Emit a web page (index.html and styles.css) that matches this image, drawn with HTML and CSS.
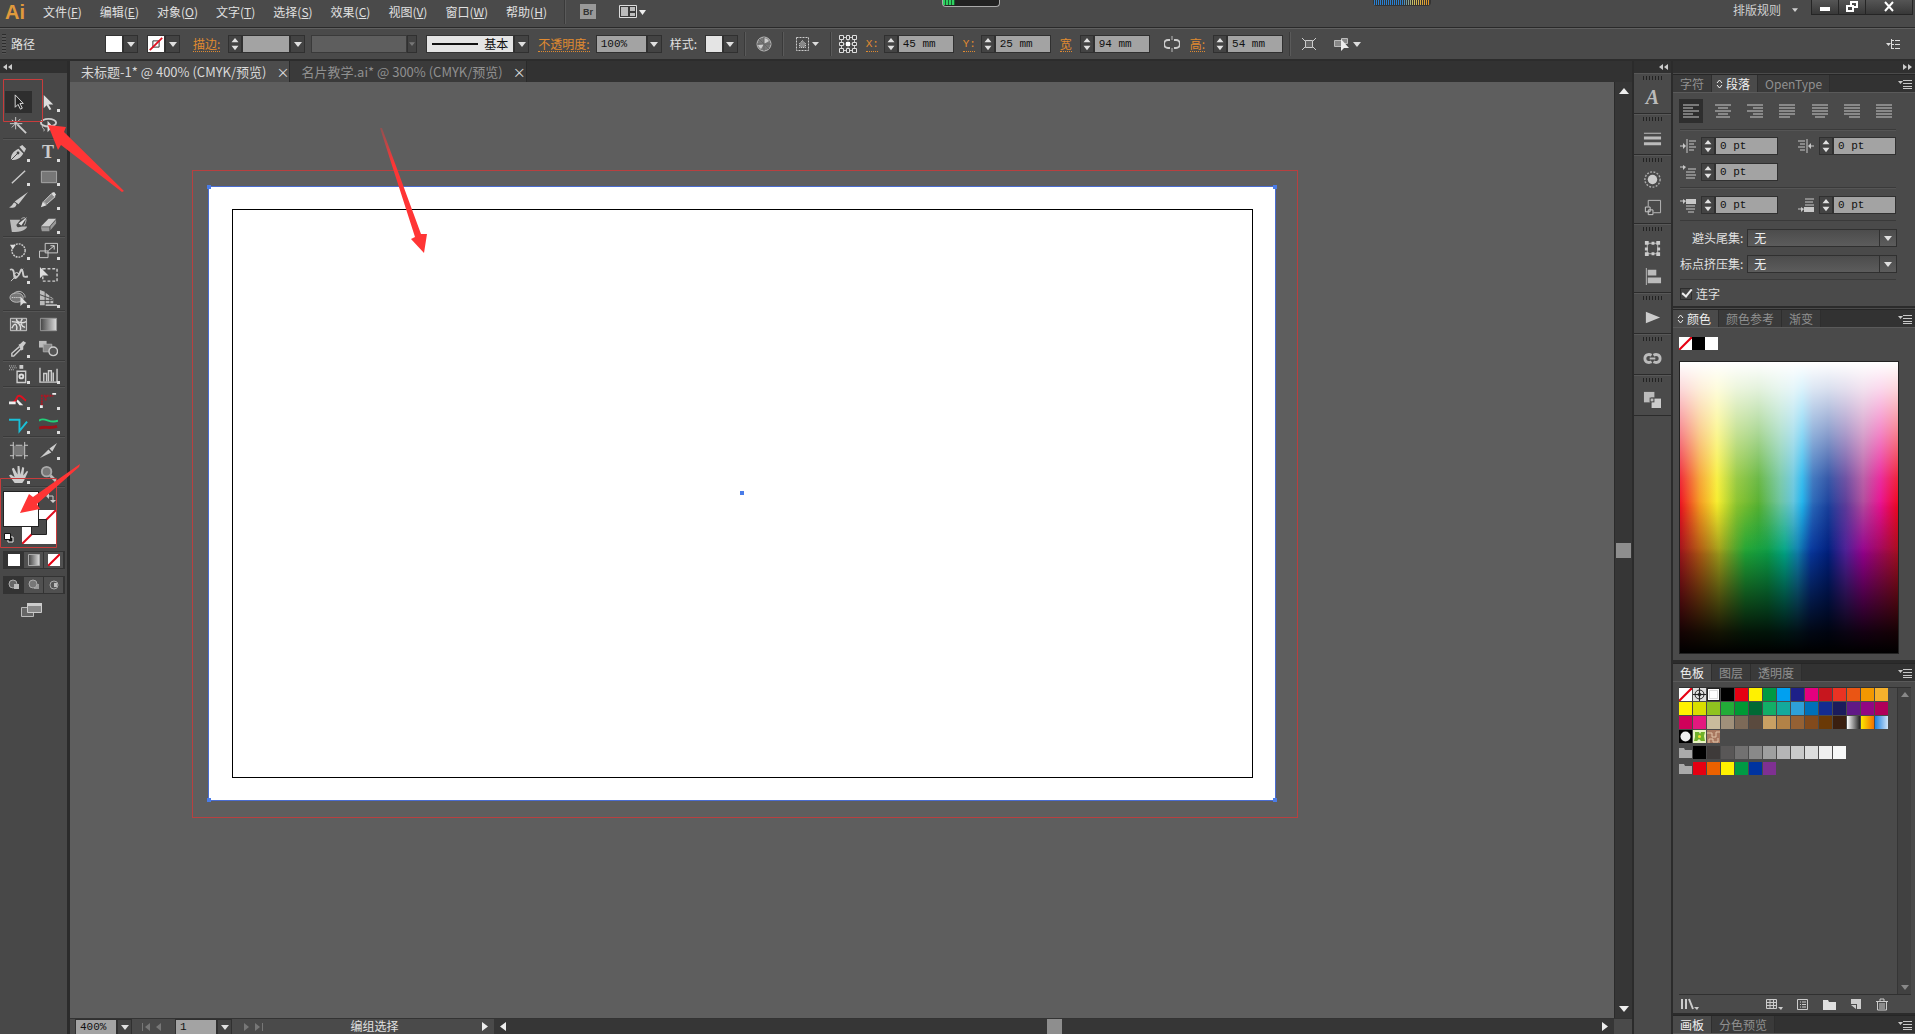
FILE: index.html
```html
<!DOCTYPE html>
<html lang="zh-CN">
<head>
<meta charset="utf-8">
<title>未标题-1 - Ai</title>
<link rel="stylesheet" href="styles.css">
</head>
<body>
<svg class="sprite" aria-hidden="true">
  <symbol id="down" viewBox="0 0 8 5"><path fill="currentColor" d="M0 0h8L4 5z"/></symbol>
  <symbol id="updown" viewBox="0 0 8 16"><path fill="currentColor" d="M0 6h8L4 1zM0 10h8l-4 5z"/></symbol>
  <symbol id="cycle" viewBox="0 0 7 10"><path fill="none" stroke="currentColor" d="M1 4l2.500-3L6 4M1 6l2.500 3L6 6"/></symbol>
  <symbol id="panelmenu" viewBox="0 0 14 10"><path fill="currentColor" d="M0 2h5L2.500 5zM5 1h9v1H5zM5 4h9v1H5zM5 7h9v1H5zM5 9h9v1H5z"/></symbol>
  <symbol id="folder" viewBox="0 0 13 11"><path fill="currentColor" d="M0 1h5l1 2h7v8H0z"/></symbol>
  <symbol id="none" viewBox="0 0 12 12"><path fill="#fff" d="M0 0h12v12H0z"/><path stroke="#e60012" stroke-width="2" d="M0 12L12 0"/></symbol>
  <linearGradient id="g1"><stop stop-color="#444"/><stop offset="1" stop-color="#ddd"/></linearGradient>
</svg>

<header class="menubar">
  <strong class="logo">Ai</strong>
  <nav class="menus">
    <button>文件(<u>F</u>)</button><button>编辑(<u>E</u>)</button><button>对象(<u>O</u>)</button><button>文字(<u>T</u>)</button><button>选择(<u>S</u>)</button><button>效果(<u>C</u>)</button><button>视图(<u>V</u>)</button><button>窗口(<u>W</u>)</button><button>帮助(<u>H</u>)</button>
  </nav>
  <i class="vsep"></i>
  <button class="bridge">Br</button>
  <button class="arrange" aria-label="排列文档"><svg width="28" height="14" viewBox="0 0 28 14"><path fill="#3a3a3a" stroke="#ddd" d="M.5.500h17v12H.5z"/><path fill="#bbb" d="M2 2h7v9H2zM11 2h5v4h-5zM11 8h5v3h-5z"/><path fill="#eee" d="M20 5h7l-3.500 5z"/></svg></button>
  <span class="meter green"></span>
  <span class="meter blue"></span>
  <button class="workspace">排版规则 <svg width="6" height="4"><use href="#down"/></svg></button>
  <div class="winbtns">
    <button aria-label="最小化"><svg width="12" height="12"><path fill="#fff" d="M1 6h10v4H1z"/></svg></button>
    <button aria-label="还原"><svg width="14" height="12"><path fill="none" stroke="#fff" stroke-width="2" d="M6 4V1h6v5H9M2 5h6v5H2z"/></svg></button>
    <button class="close" aria-label="关闭"><svg width="12" height="12"><path fill="none" stroke="#fff" stroke-width="2" d="M2 1l8 9M10 1L2 10"/></svg></button>
  </div>
</header>

<div class="control">
  <i class="grip"></i>
  <span class="kind">路径</span>
  <div class="combo"><span class="chip white"></span><button class="dd" aria-label="填色"><svg><use href="#down"/></svg></button></div>
  <div class="combo"><svg class="chip" viewBox="0 0 18 18"><path fill="#fff" d="M0 0h18v18H0z"/><path fill="none" stroke="#222" d="M5.500 5.500h7v7h-7z"/><path stroke="#e01020" stroke-width="2" d="M2 16L16 2"/></svg><button class="dd" aria-label="描边颜色"><svg><use href="#down"/></svg></button></div>
  <div class="field stroke"><label class="hot" for="sw">描边:</label><button class="spin" aria-label="微调"><svg><use href="#updown"/></svg></button><input id="sw" class="w48"><button class="dd" aria-label="粗细"><svg><use href="#down"/></svg></button></div>
  <div class="combo off"><span class="profile"></span><button class="dd" aria-label="变量宽度"><svg><use href="#down"/></svg></button></div>
  <div class="combo"><span class="brush"><i></i>基本</span><button class="dd" aria-label="画笔"><svg><use href="#down"/></svg></button></div>
  <div class="field"><label class="hot" for="op">不透明度:</label><input id="op" class="w51" value="100%"><button class="dd" aria-label="不透明度"><svg><use href="#down"/></svg></button></div>
  <div class="field style"><span class="lab">样式:</span><span class="chip pale"></span><button class="dd" aria-label="样式"><svg><use href="#down"/></svg></button></div>
  <i class="vsep"></i>
  <button class="ic" aria-label="重新着色"><svg width="16" height="16"><circle cx="8" cy="8" r="7" fill="#777" stroke="#bbb"/><path fill="#ccc" d="M8 8V2a6 6 0 015 3zM8 8l-6 1a6 6 0 003 4z"/><path stroke="#666" d="M8 1v14M1 8h14M3 3l10 10"/></svg></button>
  <i class="vsep"></i>
  <button class="ic" aria-label="对齐"><svg width="26" height="16"><path fill="none" stroke="#ccc" stroke-dasharray="2 1" d="M2.500 1.500h12v13h-12z"/><path fill="#888" stroke="#ccc" stroke-dasharray="1 1" d="M5.500 7.500l3-3 3 3v4h-6z"/><path fill="#ddd" d="M18 6h7l-3.500 4z"/></svg></button>
  <i class="vsep"></i>
  <button class="ic ref" aria-label="参考点"><svg width="20" height="20"><path fill="none" stroke="#ccc" d="M3.500 3.500h13v13h-13z"/><path fill="none" stroke="#999" d="M3 10h14M10 3v14"/><path fill="#444" stroke="#ddd" d="M1.500 1.500h4v4h-4zM8.500 1.500h3v4h-3zM14.500 1.500h4v4h-4zM1.500 8.500h4v3h-4zM14.500 8.500h4v3h-4zM1.500 14.500h4v4h-4zM8.500 14.500h3v4h-3zM14.500 14.500h4v4h-4z"/><path fill="#fff" d="M8 8h4v4H8z"/></svg></button>
  <div class="field xy"><label class="hot" for="fx">X:</label><button class="spin" aria-label="微调"><svg><use href="#updown"/></svg></button><input id="fx" value="45 mm"></div>
  <div class="field xy"><label class="hot" for="fy">Y:</label><button class="spin" aria-label="微调"><svg><use href="#updown"/></svg></button><input id="fy" value="25 mm"></div>
  <div class="field wh"><label class="hot" for="fw">宽</label><button class="spin" aria-label="微调"><svg><use href="#updown"/></svg></button><input id="fw" value="94 mm"></div>
  <button class="ic" aria-label="约束比例"><svg width="16" height="16"><path fill="none" stroke="#ccc" stroke-width="2" d="M6 4H4a3 3 0 000 8h2M10 4h2a3 3 0 010 8h-2"/><path stroke="#bbb" d="M8 0v4M8 12v4"/></svg></button>
  <div class="field gao"><label class="hot" for="fh">高:</label><button class="spin" aria-label="微调"><svg><use href="#updown"/></svg></button><input id="fh" value="54 mm"></div>
  <i class="vsep"></i>
  <button class="ic" aria-label="隔离"><svg width="16" height="16"><path fill="#666" stroke="#ccc" d="M4.500 4.500h7v7h-7z"/><path stroke="#ccc" d="M1 2l3 3M15 2l-3 3M1 14l3-3M15 14l-3-3"/></svg></button>
  <button class="ic similar" aria-label="选择类似对象"><svg width="28" height="16"><path fill="#888" stroke="#bbb" d="M1.500 4.500h7v6h-7zM8.500 2.500h6v5h-6z"/><path fill="#eee" d="M8 3v12l3-3h5z"/><path fill="#ddd" d="M20 6h8l-4 5z"/></svg></button>
  <button class="ic last" aria-label="控制面板菜单"><svg width="14" height="10"><path fill="#ddd" d="M0 4h5L2.500 7zM6 1h2v1H6zM9 1h5v1H9zM6 5h2v1H6zM9 5h5v1H9zM6 9h2v1H6zM9 9h5v1H9zM5 0h1v10H5z"/></svg></button>
</div>

<main class="main">
  <aside class="tools">
    <div class="cap left"><svg width="9" height="6"><path fill="#ccc" d="M4 0v6L0 3zM9 0v6L5 3z"/></svg></div>
    <div class="toolset">
      <div class="tg">
        <button class="t on" aria-label="选择"><svg viewBox="0 0 20 20"><path fill="#222" stroke="#ddd" d="M6.500 2v13l3-3 2.500 5 2-1-2.500-5H15z"/></svg></button>
        <button class="t m" aria-label="直接选择"><svg viewBox="0 0 20 20"><path fill="#ddd" d="M5 2v14l3-3 3 5 2-1-3-5h5z"/></svg></button>
        <button class="t" aria-label="魔棒"><svg viewBox="0 0 20 20"><path stroke="#ccc" stroke-width="2" d="M9 8l9 9"/><path stroke="#ccc" d="M7 0v13M1 7h13M3 3l9 8M12 2L3 11"/></svg></button>
        <button class="t" aria-label="套索"><svg viewBox="0 0 20 20"><ellipse cx="10" cy="6" rx="8" ry="4" fill="none" stroke="#ccc" stroke-width="2"/><path fill="none" stroke="#ccc" d="M4 9c-2 3 3 3 1 6"/><path fill="#ddd" d="M9 4v12l3-3h5z"/></svg></button>
      </div>
      <div class="tg">
        <button class="t m" aria-label="钢笔"><svg viewBox="0 0 20 20"><path fill="#ccc" d="M2 18c0-6 2-9 8-12l5 5c-3 5-6 7-13 7zM11 4l3-2 4 4-2 4z"/><path stroke="#444" d="M2 18l7-7"/><circle cx="9.500" cy="10.500" r="1.500" fill="#444"/></svg></button>
        <button class="t m tt" aria-label="文字">T</button>
        <button class="t m" aria-label="直线"><svg viewBox="0 0 20 20"><path stroke="#ccc" stroke-width="1.500" d="M3 17L17 4"/></svg></button>
        <button class="t m" aria-label="矩形"><svg viewBox="0 0 20 20"><path fill="#777" stroke="#aaa" d="M2.500 4.500h16v12h-16z"/></svg></button>
        <button class="t" aria-label="画笔"><svg viewBox="0 0 20 20"><path fill="#ccc" d="M20 1L10 14l-4-3zM8 14c-1 4-4 4-8 3 4-1 4-5 6-5z"/></svg></button>
        <button class="t m" aria-label="铅笔"><svg viewBox="0 0 20 20"><path fill="#888" stroke="#ccc" d="M5 11l8-8 4 3-9 8z"/><path fill="#ddd" d="M2 17l2-6 4 4zM13 2l3-1 2 3-2 2z"/></svg></button>
        <button class="t" aria-label="斑点画笔"><svg viewBox="0 0 20 20"><path fill="#bbb" d="M1 5h11l-3 4c-2 1-1 4 1 4l4-1h5c0 3-6 6-16 6z"/><path fill="#ddd" d="M19 2l-6 9-3-2z"/><path fill="none" stroke="#bbb" d="M13 4c4-3 7 0 3 7"/></svg></button>
        <button class="t m" aria-label="橡皮擦"><svg viewBox="0 0 20 20"><path fill="#ccc" d="M2 12l8-8h8l-7 8z"/><path fill="#999" d="M2 13h9v4H3zM12 12l6-7v4l-6 7z"/></svg></button>
      </div>
      <div class="tg">
        <button class="t m" aria-label="旋转"><svg viewBox="0 0 20 20"><circle cx="10" cy="10" r="7" fill="none" stroke="#ccc" stroke-width="1.500" stroke-dasharray="2 1"/><path fill="#ddd" d="M1 4l6 0-3 5z"/></svg></button>
        <button class="t m" aria-label="比例缩放"><svg viewBox="0 0 20 20"><path fill="none" stroke="#ccc" d="M.5 10.500h9v7h-9zM6.500 2.500h13v10h-13z"/><path fill="none" stroke="#ddd" d="M10 10l6-5M12 5h4v4"/></svg></button>
        <button class="t m" aria-label="宽度"><svg viewBox="0 0 20 20"><path fill="none" stroke="#ccc" stroke-width="2" d="M1 5c7-3 2 12 7 8s4-11 6-7-1 8 6 6"/><path fill="none" stroke="#ccc" d="M2 17L15 4"/><circle cx="8" cy="10" r="2" fill="#444" stroke="#ddd"/></svg></button>
        <button class="t" aria-label="自由变换"><svg viewBox="0 0 20 20"><path fill="none" stroke="#ccc" stroke-width="1.500" stroke-dasharray="3 2" d="M4 4h15v13H4z"/><path fill="#ddd" d="M1 2v12l3-3h6z"/></svg></button>
        <button class="t m" aria-label="形状生成器"><svg viewBox="0 0 20 20"><ellipse cx="8" cy="9" rx="7" ry="5" fill="#777" stroke="#bbb"/><path fill="none" stroke="#bbb" d="M5 5c4-5 12-2 12 4"/><path stroke="#eee" stroke-dasharray="1 1" d="M3 9h10"/><path fill="#ddd" d="M12 8v10l3-3h4z"/></svg></button>
        <button class="t m" aria-label="透视网格"><svg viewBox="0 0 20 20"><path fill="#bbb" d="M1 1l5 2v14H1zM7 4l4 3v8H7zM12 8l3 2v5h-3zM7 16h12v2H7z"/><path stroke="#444" d="M1 6l14 5M1 12h14"/></svg></button>
      </div>
      <div class="tg">
        <button class="t" aria-label="网格"><svg viewBox="0 0 20 20"><path fill="#666" stroke="#ccc" d="M1.500 3.500h17v13h-17z"/><path fill="none" stroke="#ddd" stroke-width="1.500" d="M3 14c4-9 6-2 5 2M3 7c7 0 10 3 9 9M8 4c-1 4 7 5 10 3M14 4c-3 4-1 8 3 9"/></svg></button>
        <button class="t" aria-label="渐变"><svg viewBox="0 0 20 20"><path fill="url(#g1)" stroke="#999" d="M1.500 3.500h17v13h-17z"/></svg></button>
        <button class="t m" aria-label="吸管"><svg viewBox="0 0 20 20"><path fill="#ccc" d="M10 6l2-1 3-3 3 2-3 4v3l-2 1z"/><path fill="none" stroke="#ccc" stroke-width="1.500" d="M11 8l-8 7v3h2l8-8"/></svg></button>
        <button class="t" aria-label="混合"><svg viewBox="0 0 20 20"><path fill="#bbb" d="M0 2h8v7H0z"/><path fill="#888" stroke="#aaa" d="M4.500 5.500h9v8h-9z"/><circle cx="15" cy="13" r="4.500" fill="#555" stroke="#ccc" stroke-width="1.500"/></svg></button>
      </div>
      <div class="tg">
        <button class="t m" aria-label="符号喷枪"><svg viewBox="0 0 20 20"><path stroke="#ccc" stroke-dasharray="1 1" d="M0 1h8M1 3h7M0 5h6"/><path fill="#ccc" d="M11 0h4v4h-4z"/><path fill="none" stroke="#ccc" stroke-width="1.500" d="M8.500 6.500h9v12h-9z"/><circle cx="13" cy="12" r="2" fill="none" stroke="#ddd" stroke-width="2"/></svg></button>
        <button class="t m" aria-label="柱形图"><svg viewBox="0 0 20 20"><path fill="none" stroke="#ccc" stroke-width="1.500" d="M1 3v15h18V4M5 17V9h3v8M10 17V6h3v11M15 17V8"/></svg></button>
      </div>
      <div class="tg">
        <button class="t m" aria-label="锚点移除"><svg viewBox="0 0 20 20"><path fill="none" stroke="#e01020" stroke-width="2" d="M3 12c6 0 4-8 8-7s4 4 7 5"/><path fill="#eee" d="M0 11h7v3H0zM9 9l6 6h-4l-3-4z"/></svg></button>
        <button class="t m" aria-label="圆角"><svg viewBox="0 0 20 20"><path fill="none" stroke="#b01522" stroke-width="2" stroke-dasharray="2 1" d="M3 15V5h12M7 5v5"/><path fill="#eee" d="M14 2h4v2h-4zM1 15h3v3H1z"/></svg></button>
        <button class="t m" aria-label="路径连接"><svg viewBox="0 0 20 20"><path fill="none" stroke="#1ac0d8" stroke-width="2" d="M0 5h11v12l8-10"/></svg></button>
        <button class="t m" aria-label="曲线合并"><svg viewBox="0 0 20 20"><path fill="none" stroke="#22d07a" stroke-width="2" d="M0 6c6-5 11 4 20 0"/><path fill="none" stroke="#a01018" stroke-width="3" d="M0 14c6-3 10 1 19-2"/></svg></button>
      </div>
      <div class="tg">
        <button class="t" aria-label="画板"><svg viewBox="0 0 20 20"><path fill="#777" d="M5 5h11v10H5z"/><path stroke="#ccc" d="M1 4.500h4M7 4.500h7M16 4.500h4M1 15.500h4M7 15.500h7M16 15.500h4M4.500 1v18M16.500 1v18"/></svg></button>
        <button class="t m" aria-label="切片"><svg viewBox="0 0 20 20"><path fill="#ccc" d="M1 18l9-9 3 3zM11 8l8-6-5 9z"/></svg></button>
        <button class="t m" aria-label="抓手"><svg viewBox="0 0 20 20"><path fill="#ccc" d="M6 19l-6-8 2-1 4 3-3-9 2-1 4 7V1h2l1 9 2-8 2 1-1 8 4-5 1 1-4 9-2 3z"/></svg></button>
        <button class="t" aria-label="缩放"><svg viewBox="0 0 20 20"><circle cx="8" cy="7" r="5" fill="#777" stroke="#aaa" stroke-width="2"/><path stroke="#bbb" stroke-width="3" d="M12 11l6 6"/></svg></button>
      </div>
      <div class="paint">
        <span class="pstroke"><svg viewBox="0 0 34 34"><path fill="#fff" d="M0 0h34v34H0z"/><path stroke="#e01020" stroke-width="2" d="M0 34L34 0"/><path fill="#4a4a4a" stroke="#222" d="M9.500 9.500h15v15h-15z"/></svg></span>
        <span class="pfill"></span>
        <svg class="swap" viewBox="0 0 10 10"><path fill="none" stroke="#ccc" d="M1 3h6v5"/><path fill="#ccc" d="M0 3l3-3v6zM4 7h6l-3 3z"/></svg>
        <svg class="deflt" viewBox="0 0 10 10"><path fill="#111" stroke="#eee" d="M4 4h5v5H4z"/><path fill="#fff" stroke="#111" d="M.5.500h6v6h-6z"/></svg>
      </div>
      <div class="trio">
        <button class="on" aria-label="颜色"><svg width="12" height="12"><path fill="#fff" d="M0 0h12v12H0z"/></svg></button>
        <button aria-label="渐变"><svg width="12" height="12"><path fill="url(#g1)" stroke="#aaa" d="M.5.500h11v11H.5z"/></svg></button>
        <button aria-label="无"><svg width="12" height="12"><use href="#none"/></svg></button>
      </div>
      <div class="trio modes">
        <button class="on" aria-label="正常绘图"><svg width="14" height="12"><circle cx="6" cy="5" r="4" fill="#666" stroke="#aaa"/><path fill="#bbb" d="M7 5h5v5H7z"/></svg></button>
        <button aria-label="背面绘图"><svg width="14" height="12"><path fill="#999" d="M7 5h5v5H7z"/><circle cx="6" cy="5" r="4" fill="#777" stroke="#aaa"/></svg></button>
        <button aria-label="内部绘图"><svg width="14" height="12"><circle cx="7" cy="6" r="4" fill="#555" stroke="#aaa"/><path fill="#bbb" d="M7 4h3v4H7z"/></svg></button>
      </div>
      <button class="screen" aria-label="屏幕模式"><svg width="22" height="17"><path fill="#666" stroke="#bbb" d="M.5 5.500h12v9H.5z"/><path fill="#888" stroke="#ccc" d="M6.500 1.500h14v9h-14z"/><path fill="#ccc" d="M6 1h15v3H6z"/></svg></button>
    </div>
  </aside>

  <section class="doc">
    <div class="tabs">
      <div class="tab on"><span>未标题-1* @ 400% (CMYK/预览)</span><button aria-label="关闭">×</button></div>
      <div class="tab"><span>名片教学.ai* @ 300% (CMYK/预览)</span><button aria-label="关闭">×</button></div>
    </div>
    <div class="work">
      <div class="canvas">
        <div class="bleed"></div>
        <div class="card"><i class="h tl"></i><i class="h tr"></i><i class="h bl"></i><i class="h br"></i><i class="h mid"></i><div class="safe"></div></div>
      </div>
      <div class="vscroll"><svg width="10" height="6"><path fill="#eee" d="M0 6h10L5 0z"/></svg><i class="thumb"></i><svg width="10" height="6"><path fill="#eee" d="M0 0h10L5 6z"/></svg></div>
    </div>
    <div class="status">
      <input class="w42" aria-label="缩放" value="400%"><button class="dd" aria-label="缩放"><svg><use href="#down"/></svg></button>
      <div class="pager"><svg width="8" height="8"><path fill="#777" d="M0 0h1v8H0zM8 0v8L3 4z"/></svg><svg width="8" height="8"><path fill="#777" d="M6 0v8L1 4z"/></svg></div>
      <input class="w42" aria-label="画板" value="1"><button class="dd" aria-label="画板"><svg><use href="#down"/></svg></button>
      <div class="pager"><svg width="8" height="8"><path fill="#777" d="M2 0v8l5-4z"/></svg><svg width="8" height="8"><path fill="#777" d="M7 0h1v8H7zM0 0v8l5-4z"/></svg></div>
      <span class="mode">编组选择</span>
      <svg class="go" width="6" height="9"><path fill="#eee" d="M0 0v9l6-4.500z"/></svg>
      <div class="hscroll"><svg width="6" height="9"><path fill="#eee" d="M6 0v9L0 4.500z"/></svg><i class="thumb"></i><svg width="6" height="9"><path fill="#eee" d="M0 0v9l6-4.500z"/></svg></div>
      <i class="corner"></i>
    </div>
  </section>

  <aside class="dock">
    <div class="cap right"><svg width="9" height="6"><path fill="#ccc" d="M4 0v6L0 3zM9 0v6L5 3z"/></svg></div>
    <div class="dg"><button class="fancy" aria-label="字形">A</button></div>
    <div class="dg"><button aria-label="描边"><svg viewBox="0 0 20 20"><path fill="#bbb" d="M1 4h18v1H1zM1 8h18v3H1zM1 14h18v3H1z"/></svg></button></div>
    <div class="dg"><button aria-label="外观"><svg viewBox="0 0 20 20"><circle cx="10" cy="10" r="5" fill="#ccc"/><circle cx="10" cy="10" r="8" fill="none" stroke="#aaa" stroke-width="1.500" stroke-dasharray="2 1.500"/></svg></button><button aria-label="图形样式"><svg viewBox="0 0 20 20"><path fill="none" stroke="#bbb" d="M5.500 9V2.500h13v13H11"/><path fill="#444" stroke="#ccc" d="M2.500 9.500h5v5h-5zM5.500 12.500h5v5h-5z"/></svg></button></div>
    <div class="dg"><button aria-label="变换"><svg viewBox="0 0 20 20"><path fill="none" stroke="#bbb" d="M4.500 4.500h11v11h-11z"/><path fill="#ccc" d="M2 2h4v4H2zM9 3h3v3H9zM14 2h4v4h-4zM2 9h3v3H2zM15 9h3v3h-3zM2 14h4v4H2zM9 14h3v3H9zM14 14h4v4h-4z"/></svg></button><button aria-label="对齐"><svg viewBox="0 0 20 20"><path fill="#bbb" d="M3 1h1v18H3zM5 3h9v6H5zM5 11h14v6H5z"/></svg></button></div>
    <div class="dg"><button aria-label="动作"><svg viewBox="0 0 20 20"><path fill="#ccc" d="M3 4l15 6-15 6z"/></svg></button></div>
    <div class="dg"><button aria-label="链接"><svg viewBox="0 0 20 20"><path fill="none" stroke="#bbb" stroke-width="3" d="M9 6.500C6 5 2 6 2 10s4 5 7 3.500M11 6.500c3-1.500 7-.5 7 3.500s-4 5-7 3.500"/><path stroke="#bbb" stroke-width="2" d="M7 10h6"/></svg></button></div>
    <div class="dg"><button aria-label="路径查找器"><svg viewBox="0 0 20 20"><path fill="#bbb" d="M1 2h11v11H1z"/><path fill="#ccc" stroke="#444" d="M8.500 8.500h11v11h-11z"/><path fill="#444" d="M7 8h5v5H7z"/><path fill="#bbb" d="M8 9h3v3H8z"/></svg></button></div>
  </aside>

  <aside class="panels">
    <div class="cap right"><svg width="9" height="6"><path fill="#ccc" d="M0 0v6l4-3zM5 0v6l4-3z"/></svg></div>

    <section class="panel para">
      <div class="ptabs"><button>字符</button><button class="on cyc"><svg><use href="#cycle"/></svg>段落</button><button>OpenType</button><svg class="pm"><use href="#panelmenu"/></svg></div>
      <div class="pbody">
        <div class="aligns">
          <button class="on" aria-label="左对齐"><svg><path d="M0 1h16M0 4h10M0 7h16M0 10h10M0 13h16"/></svg></button>
          <button aria-label="居中"><svg><path d="M0 1h16M3 4h10M0 7h16M3 10h10M1 13h14"/></svg></button>
          <button aria-label="右对齐"><svg><path d="M0 1h16M6 4h10M0 7h16M6 10h10M3 13h13"/></svg></button>
          <button aria-label="末行左对齐"><svg><path d="M0 1h16M0 4h16M0 7h16M0 10h16M0 13h11"/></svg></button>
          <button aria-label="末行居中"><svg><path d="M0 1h16M0 4h16M0 7h16M0 10h16M3 13h10"/></svg></button>
          <button aria-label="末行右对齐"><svg><path d="M0 1h16M0 4h16M0 7h16M0 10h16M5 13h11"/></svg></button>
          <button aria-label="全部对齐"><svg><path d="M0 1h16M0 4h16M0 7h16M0 10h16M0 13h16"/></svg></button>
        </div>
        <div class="nums">
          <div class="num"><svg><path d="M0 7h5M7 0v14M9 2h7M9 5h5M9 8h7M9 11h5"/><path class="f" d="M3 4v6l3-3z"/></svg><button class="spin" aria-label="微调"><svg><use href="#updown"/></svg></button><input aria-label="左缩进" value="0 pt"></div>
          <div class="num"><svg><path d="M11 7h5M9 0v14M0 2h7M2 5h5M0 8h7M2 11h5"/><path class="f" d="M13 4v6l-3-3z"/></svg><button class="spin" aria-label="微调"><svg><use href="#updown"/></svg></button><input aria-label="右缩进" value="0 pt"></div>
          <div class="num"><svg><path d="M0 2h4M8 4h8M6 7h9M6 10h10M6 13h9"/><path class="f" d="M3 0v5l3-3z"/></svg><button class="spin" aria-label="微调"><svg><use href="#updown"/></svg></button><input aria-label="首行缩进" value="0 pt"></div>
        </div>
        <div class="nums">
          <div class="num"><svg><path d="M0 3h4M6 8h9M6 11h9M8 14h6"/><path class="f" d="M3 1v5l3-3zM6 1h10v5H6z"/></svg><button class="spin" aria-label="微调"><svg><use href="#updown"/></svg></button><input aria-label="段前间距" value="0 pt"></div>
          <div class="num"><svg><path d="M0 11h4M7 1h9M7 4h8M7 7h9"/><path class="f" d="M3 9v5l3-3zM6 9h10v5H6z"/></svg><button class="spin" aria-label="微调"><svg><use href="#updown"/></svg></button><input aria-label="段后间距" value="0 pt"></div>
        </div>
        <div class="sels">
          <div class="sel"><label for="kin">避头尾集:</label><select id="kin"><option>无</option></select></div>
          <div class="sel"><label for="moj">标点挤压集:</label><select id="moj"><option>无</option></select></div>
        </div>
        <label class="check"><input type="checkbox" checked>连字</label>
      </div>
    </section>

    <section class="panel color">
      <div class="ptabs"><button class="on cyc"><svg><use href="#cycle"/></svg>颜色</button><button>颜色参考</button><button>渐变</button><svg class="pm"><use href="#panelmenu"/></svg></div>
      <div class="pbody">
        <div class="mini"><svg width="13" height="13" viewBox="0 0 12 12"><use href="#none"/></svg><i class="k"></i><i class="w"></i></div>
        <div class="spectrum"><i class="hi"></i><i class="lo"></i><i class="shade"></i></div>
      </div>
    </section>

    <section class="panel swatches">
      <div class="ptabs"><button class="on">色板</button><button>图层</button><button>透明度</button><svg class="pm"><use href="#panelmenu"/></svg></div>
      <div class="swbody">
        <div class="swlist">
          <div class="sw">
            <svg><use href="#none"/></svg><svg viewBox="0 0 13 13"><path fill="#ddd" d="M0 0h13v13H0z"/><circle cx="6.500" cy="6.500" r="4.500" fill="none" stroke="#222"/><circle cx="6.500" cy="6.500" r="1.500" fill="none" stroke="#222"/><path stroke="#222" d="M6.500 0v13M0 6.500h13"/></svg><i class="framed"></i><i style="background:#000"></i><i style="background:#e60012"></i><i style="background:#fff100"></i><i style="background:#009944"></i><i style="background:#00a0f0"></i><i style="background:#1d2088"></i><i style="background:#e4007f"></i><i style="background:#c7161e"></i><i style="background:#ea3323"></i><i style="background:#ea5514"></i><i style="background:#f39800"></i><i style="background:#f6b12c"></i>
            <i style="background:#fff100"></i><i style="background:#d8de00"></i><i style="background:#8fc31f"></i><i style="background:#22ac38"></i><i style="background:#009934"></i><i style="background:#006934"></i><i style="background:#13ae67"></i><i style="background:#13a99c"></i><i style="background:#2ea0d8"></i><i style="background:#0070b8"></i><i style="background:#132c90"></i><i style="background:#1b1c5c"></i><i style="background:#601986"></i><i style="background:#920783"></i><i style="background:#b0005a"></i>
            <i style="background:#d0005a"></i><i style="background:#e4187f"></i><i style="background:#c9bc9c"></i><i style="background:#a0907a"></i><i style="background:#7d6a58"></i><i style="background:#5a4a3e"></i><i style="background:#c9a063"></i><i style="background:#b28247"></i><i style="background:#956134"></i><i style="background:#824a1c"></i><i style="background:#6a3906"></i><i style="background:#3a1f10"></i><i style="background:linear-gradient(90deg,#fff,#222)"></i><i style="background:linear-gradient(90deg,#ffe800,#f07000)"></i><i style="background:linear-gradient(90deg,#1a80e0,#d0e4f8)"></i>
            <svg viewBox="0 0 13 13"><path d="M0 0h13v13H0z"/><circle cx="6.500" cy="6.500" r="5" fill="#eee"/></svg><svg viewBox="0 0 13 13"><path fill="#e8f4c0" d="M0 0h13v13H0z"/><path fill="#6fb12a" d="M2 2h4l1 2 1-2h4l-1 4 1 5H8L6 9l-2 2H1l1-4z"/><circle cx="6.500" cy="6.500" r="1.500" fill="#f0e030"/></svg><svg viewBox="0 0 13 13"><path fill="#a87860" d="M0 0h13v13H0z"/><path fill="none" stroke="#e0c4a8" d="M0 3h5v4h4V2h4M2 13V9h4v3h5V8"/></svg>
          </div>
          <div class="sw"><svg viewBox="0 0 13 13"><use href="#folder" y="1" width="13" height="11"/></svg><i style="background:#000"></i><i style="background:#3e3a39"></i><i style="background:#595757"></i><i style="background:#727171"></i><i style="background:#898989"></i><i style="background:#9fa0a0"></i><i style="background:#b5b5b6"></i><i style="background:#c9caca"></i><i style="background:#dcdddd"></i><i style="background:#efefef"></i><i style="background:#f7f8f8"></i></div>
          <div class="sw"><svg viewBox="0 0 13 13"><use href="#folder" y="1" width="13" height="11"/></svg><i style="background:#e60012"></i><i style="background:#eb6100"></i><i style="background:#fff100"></i><i style="background:#009a44"></i><i style="background:#0033a0"></i><i style="background:#7f3092"></i></div>
        </div>
        <div class="swscroll"><svg width="8" height="5"><path fill="#888" d="M0 5h8L4 0z"/></svg><svg width="8" height="5"><use href="#down"/></svg></div>
      </div>
      <div class="swfoot">
        <button class="lib" aria-label="色板库"><svg width="18" height="13"><path stroke="#ccc" stroke-width="2" d="M1 1v10M5 1v10M8 1l4 10"/><path fill="#ccc" d="M13 9h5l-2 3z"/></svg></button>
        <button aria-label="色板类型"><svg width="17" height="13"><path fill="#555" stroke="#ccc" d="M.5 1.500h10v9H.5zM.5 4.500h10M.5 7.500h10M4 1v9M7.500 1v9"/><path fill="#ccc" d="M12 9h5l-2 3z"/></svg></button>
        <button aria-label="色板选项"><svg width="12" height="13"><path fill="none" stroke="#ccc" d="M.5 1.500h10v10H.5zM3 4h1M5 4h4M3 6.500h1M5 6.500h4M3 9h1M5 9h4"/></svg></button>
        <button aria-label="新建颜色组"><svg width="13" height="11"><use href="#folder"/></svg></button>
        <button aria-label="新建色板"><svg width="12" height="12"><path fill="#ccc" d="M1 1h10v10H7V6H1z"/><path fill="#ccc" d="M1 7h5v4z"/></svg></button>
        <button aria-label="删除"><svg width="12" height="13"><path fill="none" stroke="#ccc" d="M0 3.500h12M4 3V1h4v2M1.500 4v8h9V4M4 5v6M6 5v6M8 5v6"/></svg></button>
      </div>
    </section>

    <section class="panel">
      <div class="ptabs"><button class="on">画板</button><button>分色预览</button><svg class="pm"><use href="#panelmenu"/></svg></div>
    </section>
  </aside>
</main>

<svg class="notes" aria-hidden="true">
  <defs><linearGradient id="fade" gradientUnits="userSpaceOnUse" x1="380" y1="128" x2="394" y2="165"><stop stop-color="#ff3535" stop-opacity=".3"/><stop offset="1" stop-color="#ff3535"/></linearGradient></defs>
  <path fill="none" stroke="#c83c3c" d="M3.500 79.500h39v42h-39zM.5 478.500h56v69H.5z"/>
  <path fill="#ff3535" d="M48 125l18 2-2 5 60 59-2 1-61-47-3 5z"/>
  <path fill="url(#fade)" d="M380 128l2 0 39 106 6 0-3 19-13-14 4-2z"/>
  <path fill="#ff3535" d="M80 464l-1 3-42 37 3 5-20 4 9-19 4 3z"/>
</svg>
</body>
</html>
```
FILE: styles.css
```css
* { box-sizing: border-box; }
body {
  margin: 0;
  height: 100vh;
  display: flex;
  flex-direction: column;
  overflow: hidden;
  position: relative;
  background: #4a4a4a;
  color: #e0e0e0;
  font: 12px/16px "Noto Sans CJK SC", sans-serif;
}
button, input, select { font: inherit; color: inherit; border: 0; padding: 0; margin: 0; background: none; border-radius: 0; }
svg { display: block; flex: none; }
.sprite { position: absolute; width: 0; height: 0; }
.notes { position: absolute; left: 0; top: 0; width: 100%; height: 100%; pointer-events: none; }
.vsep { width: 2px; height: 24px; background: #3a3a3a; border-right: 1px solid #5a5a5a; flex: none; }

/* menu bar */
.menubar { height: 28px; flex: none; display: flex; align-items: center; position: relative; border-bottom: 1px solid #2a2a2a; padding-bottom: 4px; }
.logo { width: 36px; padding-left: 5px; font: bold 20px/20px "Liberation Sans", sans-serif; color: #e09a3c; }
.menus { display: flex; width: 528px; padding-left: 7px; gap: 18px; }
.menus button { white-space: nowrap; }
.bridge { width: 16px; height: 15px; margin: 0 23px 0 14px; background: #999; color: #333; font: bold 9px/14px "Liberation Sans", sans-serif; }
.meter { position: absolute; top: 0; height: 7px; width: 58px; background: #222; border: 1px solid #aaa; border-top: 0; border-radius: 0 0 4px 4px; }
.meter::before { content: ""; display: block; height: 5px; }
.green { left: 942px; }
.green::before { width: 12px; background: repeating-linear-gradient(90deg, #2fd060 0 2px, #186030 2px 3px); }
.blue { left: 1373px; border-color: #333; height: 6px; }
.blue::before { background: repeating-linear-gradient(90deg, transparent 0 1px, #333 1px 2px), linear-gradient(90deg, #2a80d0 50%, #d0c060 70%, #e09020); }
.workspace { margin-left: auto; display: flex; align-items: center; gap: 11px; margin-right: 13px; padding-bottom: 4px; color: #d0d0d0; }
.winbtns { display: flex; align-self: flex-start; margin-right: 2px; border: 1px solid #252525; border-top: 0; }
.winbtns button { width: 27px; height: 14px; display: grid; place-items: center; background: linear-gradient(#555, #383838); border-right: 1px solid #252525; }
.winbtns .close { width: 46px; border: 0; }

/* control bar */
.control { height: 33px; flex: none; display: flex; align-items: center; border-top: 1px solid #606060; border-bottom: 2px solid #2c2c2c; }
.grip { width: 4px; height: 20px; margin: 0 5px 0 2px; background: repeating-linear-gradient(#2c2c2c 0 1px, #555 1px 3px); }
.kind { width: 94px; }
.combo, .field { display: flex; align-items: center; height: 18px; flex: none; }
.combo { margin-right: 9px; }
.chip { width: 18px; height: 18px; border: 1px solid #333; }
.white { background: #fff; }
.pale { background: #e4e4e4; }
.dd { width: 15px; height: 18px; display: grid; place-items: center; background: #434343; border: 1px solid #303030; flex: none; }
.dd svg { width: 8px; height: 5px; color: #e0e0e0; }
.off .dd svg { color: #777; }
.spin { width: 14px; height: 18px; display: grid; place-items: center; background: #434343; border: 1px solid #303030; flex: none; }
.spin svg { width: 8px; height: 14px; color: #e0e0e0; }
input { width: 56px; height: 18px; padding: 0 4px 1px; background: #a3a3a3; border: 1px solid #303030; color: #111; font: 11px/14px "Liberation Mono", monospace; }
.w48 { width: 48px; }
.w51 { width: 51px; }
.w42 { width: 42px; }
.hot { color: #e08a30; border-bottom: 1px dotted #e08a30; line-height: 14px; white-space: nowrap; flex: none; }
.stroke { margin: 0 6px 0 4px; }
.stroke .hot, .wh .hot, .gao .hot { margin-right: 8px; }
#op { margin-left: 6px; }
.profile { width: 96px; height: 18px; background: #5e5e5e; border: 1px solid #3a3a3a; }
.off .dd { width: 10px; }
.off .dd svg { width: 6px; height: 4px; }
.brush { width: 88px; height: 18px; display: flex; align-items: center; gap: 6px; padding-left: 5px; background: #e4e4e4; border: 1px solid #333; color: #111; }
.brush i { width: 46px; height: 2px; background: #111; }
.style { margin: 0 6px 0 8px; }
.lab { width: 35px; white-space: nowrap; }
.ic { margin: 0 10px; flex: none; }
.ref { margin: 0 8px 0 6px; }
.similar { margin-left: 6px; }
.xy { margin-right: 9px; }
.xy .hot { width: 12px; margin-right: 6px; font-family: "Liberation Mono", monospace; font-size: 11px; }
.wh { margin-right: 4px; }
.gao { margin-right: 6px; }
.last { margin: 0 15px 0 auto; }

/* main columns */
.main { flex: 1; min-height: 0; display: flex; }
.cap { height: 12px; flex: none; display: flex; align-items: center; background: #303030; padding: 0 3px; }
.right { justify-content: flex-end; }
.tools { width: 70px; flex: none; border-right: 3px solid #2b2b2b; background: #484848; }
.toolset { padding: 17px 2px 0 3px; }
.tg { display: grid; grid-template-columns: 30px 30px; grid-auto-rows: 24px; border-bottom: 1px solid #3a3a3a; box-shadow: 0 1px #555; margin-bottom: 1px; }
.t { position: relative; display: grid; place-items: center; }
.t svg { width: 19px; height: 19px; }
.t.on::before { content: ""; position: absolute; left: 2px; top: 1px; width: 27px; height: 22px; background: #2e2e2e; }
.t.on svg { position: relative; }
.m::after { content: ""; position: absolute; right: 3px; bottom: 2px; width: 3px; height: 3px; background: #ddd; }
.tt { font: bold 18px/20px "Liberation Serif", serif; color: #ccc; }
.paint { position: relative; height: 63px; }
.pfill { position: absolute; left: 0; top: 3px; width: 36px; height: 36px; background: #fff; border: 1px solid #222; }
.pstroke { position: absolute; left: 19px; top: 22px; width: 34px; height: 34px; }
.swap { position: absolute; left: 43px; top: 5px; width: 10px; height: 10px; }
.deflt { position: absolute; left: 1px; top: 45px; width: 10px; height: 10px; }
.trio { display: flex; border: 1px solid #333; }
.trio button { flex: 1; height: 16px; display: grid; place-items: center; border-right: 1px solid #333; background: #505050; }
.trio .on { background: #333; }
.modes { margin-top: 7px; }
.screen { display: flex; justify-content: center; width: 100%; padding: 8px 4px 0 0; }

/* document */
.doc { flex: 1; min-width: 0; display: flex; flex-direction: column; }
.tabs { height: 21px; flex: none; display: flex; background: #323232; }
.tab { display: flex; align-items: center; justify-content: space-between; gap: 10px; padding: 0 5px 0 11px; background: #3a3a3a; color: #909090; font-size: 13px; white-space: nowrap; border-right: 1px solid #2a2a2a; }
.tab.on { background: #4c4c4c; color: #d8d8d8; }
.tab button { width: 8px; color: #e0e0e0; line-height: 14px; }
.work { flex: 1; min-height: 0; display: flex; }
.canvas { flex: 1; position: relative; background: #5e5e5e; overflow: hidden; }
.bleed { position: absolute; left: 122px; top: 88px; width: 1106px; height: 648px; border: 1px solid #b84040; }
.card { position: absolute; left: 138px; top: 104px; width: 1068px; height: 615px; background: #fff; border: 1px solid #4a6cd0; }
.safe { position: absolute; left: 23px; top: 22px; width: 1021px; height: 569px; border: 1px solid #000; }
.h { position: absolute; width: 4px; height: 4px; background: #4a7ce8; }
.tl { left: -2px; top: -2px; }
.tr { right: -2px; top: -2px; }
.bl { left: -2px; bottom: -2px; }
.br { right: -2px; bottom: -2px; }
.mid { left: 531px; top: 304px; }
.vscroll { width: 18px; display: flex; flex-direction: column; align-items: center; justify-content: space-between; padding: 6px 0; background: #363636; border-left: 1px solid #2b2b2b; }
.thumb { width: 15px; height: 15px; background: #8e8e8e; }
.status { height: 16px; flex: none; display: flex; align-items: flex-start; padding-left: 5px; border-top: 1px solid #333; }
.status input, .status .dd { height: 15px; border-bottom: 0; }
.pager { display: flex; justify-content: space-between; width: 43px; padding: 4px 12px 0 10px; }
.mode { width: 179px; text-align: center; margin: 0 18px 0 10px; line-height: 14px; }
.go { margin: 3px 6px 0 0; }
.hscroll { flex: 1; height: 15px; display: flex; align-items: center; justify-content: space-between; padding: 0 6px; background: #363636; }
.corner { width: 18px; }

/* icon dock */
.dock { width: 41px; flex: none; border: 1px solid #2b2b2b; border-width: 0 2px; }
.dg { padding: 10px 0 2px; border-bottom: 1px solid #2b2b2b; box-shadow: inset 0 1px #585858; background: repeating-linear-gradient(90deg, #222 0 1px, #4a4a4a 1px 3px) 9px 3px / 21px 4px no-repeat; }
.dg button { display: grid; place-items: center; width: 100%; height: 28px; }
.dg svg { width: 19px; height: 19px; }
.dg .fancy { font: italic bold 20px/24px "Liberation Serif", serif; color: #bbb; }

/* panels */
.panels { width: 242px; flex: none; display: flex; flex-direction: column; }
.ptabs { height: 19px; display: flex; background: #323232; border-top: 1px solid #262626; border-bottom: 1px solid #5a5a5a; }
.ptabs button { padding: 0 7px; color: #909090; background: #3a3a3a; line-height: 16px; border-right: 1px solid #2e2e2e; white-space: nowrap; }
.ptabs .on { background: #4a4a4a; color: #f0f0f0; }
.ptabs .cyc { display: flex; align-items: center; gap: 3px; padding-left: 4px; }
.cyc svg { width: 7px; height: 10px; }
.pm { width: 14px; height: 10px; margin: 4px 3px 0 auto; color: #c8c8c8; }
.pbody { padding: 6px 19px 6px 7px; border-bottom: 2px solid #2b2b2b; }
.aligns { display: flex; justify-content: space-between; margin-left: -1px; }
.aligns button { width: 24px; height: 24px; display: grid; place-items: center; }
.aligns .on { background: #2e2e2e; }
.aligns svg { width: 16px; height: 15px; stroke: #c8c8c8; }
.nums { display: grid; grid-template-columns: 98px 98px; justify-content: space-between; gap: 8px; margin-top: 6px; padding: 7px 0 0; border-top: 1px solid #3a3a3a; box-shadow: inset 0 1px #555; }
.nums + .nums { padding-top: 8px; }
.num { display: flex; align-items: center; }
.num > svg { width: 16px; height: 15px; margin-right: 5px; stroke: #c8c8c8; }
.num .f { fill: #c8c8c8; stroke: none; }
.num input { flex: 1; min-width: 0; }
.sels { display: grid; gap: 8px; margin-top: 6px; padding: 8px 0 6px; border: 1px solid #3a3a3a; border-width: 1px 0; }
.sel { position: relative; display: flex; align-items: center; justify-content: flex-end; gap: 4px; height: 18px; white-space: nowrap; }
.sel::after { content: ""; position: absolute; right: 5px; top: 7px; border: 4px solid transparent; border-top: 5px solid #e0e0e0; border-bottom: 0; }
select { appearance: none; width: 150px; height: 18px; padding: 0 6px; border: 1px solid #303030; color: #eee; line-height: 16px; background: linear-gradient(90deg, transparent 131px, #303030 131px 132px, transparent 132px), linear-gradient(#4c4c4c, #5c5c5c); }
.check { display: flex; align-items: center; gap: 4px; height: 16px; margin: 6px 0 0; }
.check input { appearance: none; width: 12px; height: 12px; background: #444; border: 1px solid #2c2c2c; padding: 0; position: relative; }
.check input::after { content: ""; position: absolute; left: 3px; top: -2px; width: 4px; height: 8px; border: solid #eee; border-width: 0 2px 2px 0; transform: rotate(40deg); }
.para .pbody { height: 215px; }
.color .pbody { padding: 9px 16px 6px 6px; }
.mini { display: flex; }
.mini i { width: 13px; height: 13px; }
.k { background: #000; }
.w { background: #fff; }
.spectrum { position: relative; height: 293px; margin: 11px 0 0; border: 1px solid #222; }
.spectrum i { position: absolute; inset: 0; }
.hi { background: linear-gradient(90deg, #ee1020 0%, #f59a20 9%, #f7ee2c 17%, #8cc42e 26%, #58b030 36%, #6cc4a0 46%, #62c4dc 52%, #20b4ec 56%, #2a68b8 61%, #1c429c 68%, #5c3c98 76%, #b04c9c 84%, #e81090 92%, #f0061e 100%); }
.lo { background: linear-gradient(90deg, #a0141c 0%, #b05a14 9%, #a0a01c 18%, #20a838 30%, #0ca048 40%, #00a888 48%, #1080b0 54%, #0838a0 60%, #002080 68%, #50209a 76%, #980090 84%, #a00860 91%, #a81020 100%); mask-image: linear-gradient(transparent 48%, #000 66%); }
.shade { background: linear-gradient(#fff 0%, rgba(255,255,255,.84) 9%, rgba(255,255,255,.5) 24%, rgba(255,255,255,.12) 40%, transparent 50%, rgba(0,0,0,.02) 64%, rgba(0,0,0,.5) 80%, rgba(0,0,0,.88) 93%, #000 100%); }
.swatches { flex: 1; min-height: 0; display: flex; flex-direction: column; border-top: 1px solid #2b2b2b; }
.color .ptabs, .para .ptabs { margin-top: 1px; }
.swbody { flex: 1; min-height: 0; display: flex; margin: 5px 4px 0 6px; border-top: 1px solid #303030; border-bottom: 1px solid #303030; }
.swlist { flex: 1; display: flex; flex-direction: column; align-items: flex-start; gap: 3px; }
.sw { display: grid; grid-template-columns: repeat(15, 13px); grid-auto-rows: 13px; gap: 1px; }
.sw svg { width: 13px; height: 13px; color: #aaa; }
.framed { background: #fff; border: 1px solid #222; outline: 1px solid #ddd; outline-offset: -3px; }
.swscroll { width: 14px; display: flex; flex-direction: column; justify-content: space-between; align-items: center; padding: 4px 0; background: #414141; border-left: 1px solid #353535; color: #888; }
.swfoot { display: flex; align-items: center; justify-content: flex-end; gap: 14px; height: 20px; padding: 0 27px 0 8px; border-bottom: 2px solid #2b2b2b; }
.lib { margin-right: auto; }
```
